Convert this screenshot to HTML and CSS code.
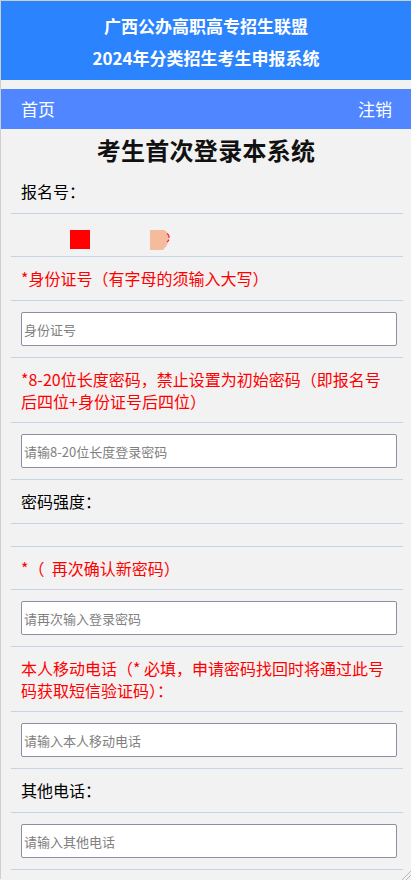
FILE: index.html
```html
<!DOCTYPE html>
<html lang="zh-CN">
<head>
<meta charset="utf-8">
<title>考生首次登录本系统</title>
<link rel="stylesheet" href="styles.css">
</head>
<body>
<header class="banner">
  <div>广西公办高职高专招生联盟</div>
  <div>2024年分类招生考生申报系统</div>
</header>
<nav class="nav">
  <span>首页</span>
  <span>注销</span>
</nav>
<h1 class="title">考生首次登录本系统</h1>
<div class="form">
  <div class="row">报名号：</div>
  <div class="row imgrow">
    <span class="redbox"></span>
    <svg class="peach" width="22" height="20" viewBox="0 0 22 20">
      <path d="M0 0 H14 Q18.5 2 18.5 8 Q18.5 15 13 20 H0 Z" fill="#f4bc9c"/>
      <path d="M17 3.5 Q19.5 5 19 8" fill="none" stroke="#ff1a3a" stroke-width="1.2"/>
      <path d="M17 12 Q18.5 11 19 9.5" fill="none" stroke="#ff1a3a" stroke-width="1.2"/>
    </svg>
  </div>
  <div class="row red">*身份证号（有字母的须输入大写）</div>
  <div class="row inrow"><input class="field" type="text" placeholder="身份证号"></div>
  <div class="row red multi">*8-20位长度密码，禁止设置为初始密码（即报名号后四位+身份证号后四位）</div>
  <div class="row inrow"><input class="field" type="password" placeholder="请输8-20位长度登录密码"></div>
  <div class="row">密码强度：</div>
  <div class="row empty"></div>
  <div class="row red short">*（&nbsp;&nbsp;再次确认新密码）</div>
  <div class="row inrow"><input class="field" type="password" placeholder="请再次输入登录密码"></div>
  <div class="row red multi">本人移动电话（* 必填，申请密码找回时将通过此号码获取短信验证码）：</div>
  <div class="row inrow"><input class="field" type="text" placeholder="请输入本人移动电话"></div>
  <div class="row">其他电话：</div>
  <div class="row inrow"><input class="field" type="text" placeholder="请输入其他电话"></div>
</div>
<svg class="grip" width="11" height="11" viewBox="0 0 11 11">
  <path d="M11 2 L2 11 M11 6 L6 11" stroke="#b8b8b8" stroke-width="1"/>
</svg>
</body>
</html>
```

FILE: styles.css
```css
html, body {
  margin: 0;
  padding: 0;
}
body {
  background: #f2f2f2;
  border-top: 1px solid #cccccc;
  border-left: 1px solid #cfcfcf;
  font-family: "Noto Sans CJK SC", "Liberation Sans", sans-serif;
  font-size: 16px;
  color: #000;
  min-height: 879px;
  box-sizing: border-box;
}
.banner {
  background: #2b84fe;
  color: #fff;
  text-align: center;
  font-weight: bold;
  font-size: 17px;
  line-height: 32px;
  padding: 9px 0 6px;
}
.nav {
  margin-top: 9px;
  background: #5086ff;
  color: #fff;
  display: flex;
  justify-content: space-between;
  height: 40px;
  line-height: 40px;
  font-size: 17px;
  padding: 0 19px 0 20px;
}
.title {
  margin: 0;
  text-align: center;
  font-size: 24px;
  font-weight: bold;
  line-height: 41px;
  color: #111;
  letter-spacing: 0.3px;
}
.form {
  margin: 0 8px 0 10px;
}
.row {
  border-bottom: 1px solid #c6d3e4;
  padding: 10px 10px 11px 10px;
  line-height: 22px;
}
.red {
  color: #ff0000;
}
.multi {
  padding-bottom: 10px;
}
.short {
  padding-bottom: 10px;
}
.imgrow {
  display: flex;
  align-items: flex-start;
  padding: 16px 10px 6px 10px;
  height: 20px;
  line-height: 20px;
}
.redbox {
  display: block;
  width: 20px;
  height: 19px;
  background: #ff0000;
  margin-left: 49px;
}
.peach {
  display: block;
  margin-left: 60px;
}
.empty {
  padding: 0;
  height: 22px;
}
.inrow {
  padding: 11px 6px 11px 10px;
  line-height: normal;
}
.field {
  display: block;
  box-sizing: border-box;
  width: 100%;
  height: 34px;
  margin: 0;
  border: 1px solid #8e8ea2;
  border-radius: 2px;
  background: #fff;
  padding: 0 2px;
  font-family: "Noto Sans CJK SC", "Liberation Sans", sans-serif;
  font-size: 13px;
  outline: none;
}
.field::placeholder {
  color: #808080;
}
.grip {
  position: fixed;
  right: 0;
  bottom: 0;
}
```
